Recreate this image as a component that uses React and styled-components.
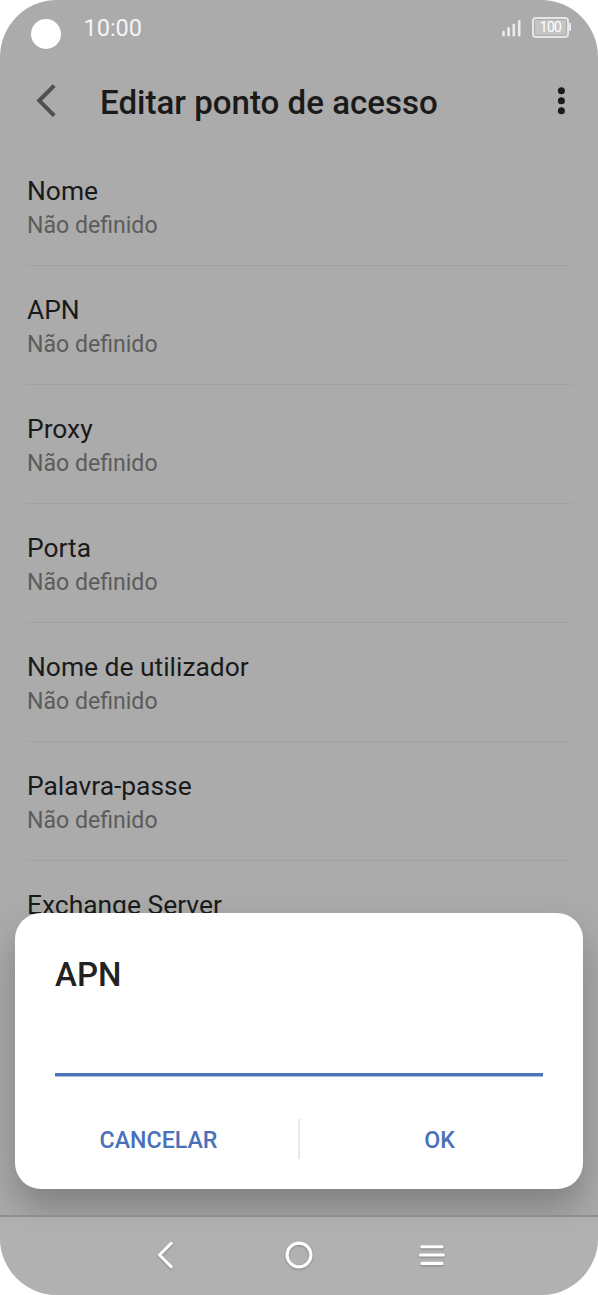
import React from "react";
import styled, { createGlobalStyle } from "styled-components";

const fields = [
  { label: "Nome", value: "Não definido" },
  { label: "APN", value: "Não definido" },
  { label: "Proxy", value: "Não definido" },
  { label: "Porta", value: "Não definido" },
  { label: "Nome de utilizador", value: "Não definido" },
  { label: "Palavra-passe", value: "Não definido" },
  { label: "Exchange Server", value: "Não definido" },
];

const StatusBar = () => {
  return (
    <Status>
      <Camera />
      <Clock>10:00</Clock>
      <Signal width="20" height="18" viewBox="0 0 20 18">
        <path
          d="M1.5 13V16.3M6.6 9.3V16.3M11.8 6V16.3M17.2 2.2V16.3"
          fill="none"
          stroke="#ececec"
          strokeWidth="2.6"
          strokeLinecap="round"
        />
      </Signal>
      <Battery>
        <BatteryLevel>100</BatteryLevel>
      </Battery>
      <BatteryTip />
    </Status>
  );
};

const Field = ({ label, value }) => {
  return (
    <Row>
      <Label>{label}</Label>
      <Value>{value}</Value>
    </Row>
  );
};

const ApnDialog = () => {
  return (
    <Dialog role="dialog">
      <DialogTitle>APN</DialogTitle>
      <Input type="text" aria-label="APN" />
      <Actions>
        <Action>CANCELAR</Action>
        <Separator />
        <Action>OK</Action>
      </Actions>
    </Dialog>
  );
};

const App = () => {
  return (
    <>
      <GlobalStyle />
      <Screen>
        <StatusBar />
        <Header>
          <Back width="22" height="36" viewBox="0 0 22 36">
            <path d="M19.2 2.6L4.3 17.6L19.2 32.6" fill="none" stroke="#505050" strokeWidth="4.1" />
          </Back>
          <Title>Editar ponto de acesso</Title>
          <More width="8" height="28" viewBox="0 0 8 28">
            <circle cx="4.4" cy="3.7" r="3.5" />
            <circle cx="4.4" cy="13.7" r="3.5" />
            <circle cx="4.4" cy="23.7" r="3.5" />
          </More>
        </Header>
        <List>
          {fields.map((field) => (
            <Field key={field.label} {...field} />
          ))}
        </List>
        <ApnDialog />
        <NavBar>
          <NavIcon width="32" height="32" viewBox="0 0 32 32">
            <path d="M21.1 4.4L9.5 16L21.1 27.6" strokeLinejoin="round" />
          </NavIcon>
          <NavIcon width="32" height="32" viewBox="0 0 32 32">
            <circle cx="16" cy="16" r="11.9" />
          </NavIcon>
          <NavIcon width="32" height="32" viewBox="0 0 32 32">
            <path d="M5.8 7.7H26M4.5 16H27.3M5.8 24.4H26" />
          </NavIcon>
        </NavBar>
      </Screen>
    </>
  );
};

export default App;

const GlobalStyle = createGlobalStyle`
  body {
    margin: 0;
    background: #fff;
    font-family: Roboto, sans-serif;
  }

  * {
    box-sizing: border-box;
  }
`;

const Screen = styled.div`
  position: relative;
  display: flex;
  flex-direction: column;
  width: 598px;
  height: 1295px;
  background: #ababab;
  border-radius: 57px;
  overflow: hidden;
`;

const Status = styled.div`
  display: flex;
  align-items: flex-start;
  flex: none;
  height: 56px;
  padding: 0 27px 0 31px;
`;

const Camera = styled.div`
  width: 30px;
  height: 30px;
  margin-top: 19px;
  border-radius: 50%;
  background: #fff;
`;

const Clock = styled.div`
  margin: 14px auto 0 22.5px;
  color: #f5f5f5;
  font-size: 23.5px;
  line-height: 28px;
`;

const Signal = styled.svg`
  margin: 19px 10px 0 0;
`;

const Battery = styled.div`
  width: 37px;
  height: 21px;
  margin-top: 17px;
  padding: 1px;
  border: 2px solid #e6e6e6;
  border-radius: 4px;
`;

const BatteryLevel = styled.div`
  height: 15px;
  border-radius: 1px;
  background: #c4c4c4;
  color: #fff;
  font-size: 13.8px;
  letter-spacing: -0.6px;
  line-height: 15px;
  text-align: center;
`;

const BatteryTip = styled.div`
  width: 2px;
  height: 8px;
  margin-top: 23px;
  border-radius: 0 1px 1px 0;
  background: #ececec;
`;

const Header = styled.header`
  display: flex;
  align-items: flex-start;
  flex: none;
  height: 91px;
  padding: 0 33px 0 35px;
`;

const Back = styled.svg`
  margin-top: 27px;
`;

const Title = styled.h1`
  margin: 27px auto 0 43px;
  color: #1a1a1a;
  font-size: 33.1px;
  font-weight: 500;
  line-height: 40px;
`;

const More = styled.svg`
  margin-top: 31px;
  fill: #1a1a1a;
`;

const List = styled.div`
  flex: 1;
  min-height: 0;
  padding: 0 26px 0 27px;
  overflow: hidden;
`;

const Row = styled.div`
  height: 119px;
  padding-top: 29px;
  border-bottom: 1px solid #a2a2a2;
`;

const Label = styled.div`
  color: #1a1a1a;
  font-size: 26.4px;
  line-height: 30px;
`;

const Value = styled.div`
  margin-top: 6px;
  color: #5c5c5c;
  font-size: 23.1px;
  line-height: 28px;
`;

const Dialog = styled.div`
  position: absolute;
  left: 15px;
  right: 15px;
  bottom: 106px;
  display: flex;
  flex-direction: column;
  height: 276px;
  padding: 42px 40px 30px;
  border-radius: 26px;
  background: #fff;
  box-shadow: 0 20px 36px rgba(0, 0, 0, 0.25);
`;

const DialogTitle = styled.h2`
  margin: 0;
  color: #222;
  font-size: 33px;
  font-weight: 500;
  line-height: 40px;
`;

const Input = styled.input`
  width: 100%;
  height: 56px;
  margin-top: 25px;
  padding: 0;
  border: 0;
  border-bottom: 3px solid #4b73b8;
  border-radius: 0;
  box-shadow: 0 1px #a9bddd;
  outline: none;
  background: transparent;
  font: 26px Roboto, sans-serif;
`;

const Actions = styled.div`
  display: grid;
  grid-template-columns: 1fr 2px 1fr;
  align-items: center;
  margin: 43px -36px 0;
`;

const Action = styled.button`
  height: 40px;
  padding: 2px 0 0;
  border: 0;
  background: none;
  color: #4b70b8;
  font: 500 23.2px Roboto, sans-serif;
`;

const Separator = styled.div`
  height: 40px;
  background: #e8e8e8;
`;

const NavBar = styled.nav`
  position: relative;
  display: flex;
  flex: none;
  justify-content: center;
  gap: 101px;
  height: 80px;
  padding-top: 22px;
  border-top: 2px solid #8e8e8e;
  background: rgba(182, 182, 182, 0.6);
`;

const NavIcon = styled.svg`
  fill: none;
  stroke: #fff;
  stroke-width: 3.1;
  stroke-linecap: round;
  filter: drop-shadow(0 1px 1px rgba(0, 0, 0, 0.25));
`;
